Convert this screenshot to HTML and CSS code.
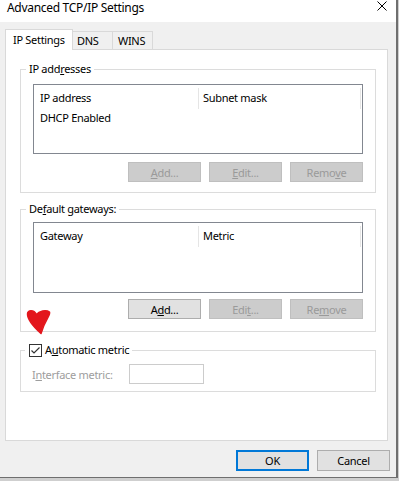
FILE: index.html
```html
<!DOCTYPE html>
<html lang="en">
<head>
    <meta charset="UTF-8">
    <meta name="viewport" content="width=device-width, initial-scale=1.0">
    <title>Advanced TCP/IP Settings</title>
    <link rel="stylesheet" href="styles.css">
</head>
<body>
    <div class="window">
        <div class="titlebar">
            <span class="title">Advanced TCP/IP Settings</span>
            <svg class="close" width="10" height="10" viewBox="0 0 10 10">
                <path d="M0.5 0.5 L9.5 9.5 M9.5 0.5 L0.5 9.5" stroke="#000" stroke-width="1" fill="none"/>
            </svg>
        </div>
        <div class="tabs">
            <div class="tab active">IP Settings</div>
            <div class="tab tab-dns">DNS</div>
            <div class="tab tab-wins">WINS</div>
        </div>
        <div class="panel">
            <div class="group group-ip">
                <div class="group-title">IP add<u>r</u>esses</div>
                <div class="listbox">
                    <div class="list-head">
                        <span class="col col-1">IP address</span>
                        <span class="col col-2">Subnet mask</span>
                    </div>
                    <div class="list-row">DHCP Enabled</div>
                </div>
                <div class="btn-row">
                    <button class="btn" disabled><u>A</u>dd...</button>
                    <button class="btn" disabled><u>E</u>dit...</button>
                    <button class="btn" disabled>Remo<u>v</u>e</button>
                </div>
            </div>
            <div class="group group-gw">
                <div class="group-title">De<u>f</u>ault gateways:</div>
                <div class="listbox listbox-gw">
                    <div class="list-head">
                        <span class="col col-1">Gateway</span>
                        <span class="col col-2">Metric</span>
                    </div>
                </div>
                <div class="btn-row">
                    <button class="btn">A<u>d</u>d...</button>
                    <button class="btn" disabled>Edi<u>t</u>...</button>
                    <button class="btn" disabled>Re<u>m</u>ove</button>
                </div>
            </div>
            <div class="group group-metric">
                <div class="group-title check-title">
                    <span class="checkbox">
                        <svg width="11" height="11" viewBox="0 0 11 11">
                            <path d="M1.5 5.5 L4 8 L9.5 2.5" stroke="#333" stroke-width="1.2" fill="none"/>
                        </svg>
                    </span>
                    <span>A<u>u</u>tomatic metric</span>
                </div>
                <div class="metric-row">
                    <span class="metric-label">I<u>n</u>terface metric:</span>
                    <span class="metric-input"></span>
                </div>
            </div>
        </div>
        <div class="footer">
            <button class="btn btn-default">OK</button>
            <button class="btn">Cancel</button>
        </div>
    </div>

    <!-- red marker drawn on top of the screenshot -->
    <svg class="scribble" width="28" height="28" viewBox="0 0 28 28">
        <path d="M3.5 6 C 3.5 1.5, 10 1.5, 12.5 6.5 C 15 3, 22 1.5, 25.5 4 C 27 7, 21 11, 17 25.5 C 12 21, 3.5 12, 3.5 6 Z" fill="#e3161c" stroke="#e3161c" stroke-width="1.5" stroke-linejoin="round"/>
    </svg>
</body>
</html>
```

FILE: styles.css
```css
body {
    margin: 0;
    background-color: #cfcfcf;
    font-family: "Noto Sans", "Liberation Sans", sans-serif;
    font-size: 11px;
    letter-spacing: -0.3px;
    color: #000;
}
.window {
    width: 396px;
    height: 477px;
    background-color: #f0f0f0;
    border-right: 2px solid #6f6f6f;
    border-bottom: 1px solid #6f6f6f;
    display: flex;
    flex-direction: column;
}
.titlebar {
    height: 22px;
    background-color: #fff;
    display: flex;
    justify-content: space-between;
    align-items: flex-start;
    padding: 0 9px 0 7px;
}
.title {
    font-size: 12px;
    line-height: 15px;
}
.close {
    margin-top: 1px;
}
.tabs {
    display: flex;
    align-items: flex-end;
    height: 20px;
    margin: 7px 0 0 5px;
    white-space: nowrap;
}
.tab {
    box-sizing: border-box;
    height: 18px;
    line-height: 18px;
    width: 40px;
    border: 1px solid #d9d9d9;
    border-left: none;
    border-bottom: none;
    background-color: #f0f0f0;
}
.tab.active {
    position: relative;
    width: 68px;
    height: 21px;
    line-height: 20px;
    margin-bottom: -1px;
    padding-left: 7px;
    border-left: 1px solid #d9d9d9;
    background-color: #fff;
}
.tab-dns {
    padding-left: 4px;
}
.tab-wins {
    padding-left: 5px;
}
.panel {
    box-sizing: border-box;
    height: 392px;
    margin: 0 8px 0 5px;
    padding: 19px 11px 0 14px;
    background-color: #fff;
    border: 1px solid #d9d9d9;
}
.group {
    border: 1px solid #dcdcdc;
    padding: 0 12px;
}
.group-title {
    width: max-content;
    height: 16px;
    line-height: 16px;
    margin: -9px 0 0 -7px;
    padding: 0 3px;
    background-color: #fff;
}
.group-ip {
    padding-bottom: 10px;
}
.group-gw {
    margin-top: 16px;
    padding-bottom: 12px;
}
.group-metric {
    margin-top: 18px;
    padding-bottom: 7px;
}
.listbox {
    box-sizing: border-box;
    height: 70px;
    margin-top: 7px;
    border: 1px solid #828790;
    background-color: #fff;
}
.listbox-gw {
    height: 71px;
    margin-top: 5px;
}
.list-head {
    display: flex;
    padding-top: 3px;
}
.col {
    box-sizing: border-box;
    height: 21px;
    line-height: 19px;
    border-right: 1px solid #e5e5e5;
}
.col-1 {
    width: 165px;
    padding-left: 6px;
}
.col-2 {
    width: 162px;
    padding-left: 4px;
}
.list-row {
    line-height: 16px;
    padding: 1px 0 0 6px;
}
.btn-row {
    display: flex;
    justify-content: flex-end;
    gap: 8px;
    margin-top: 8px;
}
.group-gw .btn-row {
    margin-top: 6px;
}
.btn {
    box-sizing: border-box;
    width: 73px;
    height: 20px;
    padding: 0;
    border: 1px solid #adadad;
    background-color: #e1e1e1;
    font-family: inherit;
    font-size: 11px;
    letter-spacing: -0.3px;
    color: #000;
}
.btn:disabled {
    background-color: #cccccc;
    border-color: #bfbfbf;
    color: #9a9a9a;
}
.check-title {
    display: flex;
    align-items: center;
    gap: 3px;
    margin-left: -8px;
    padding: 0 3px 0 4px;
}
.checkbox {
    box-sizing: border-box;
    width: 13px;
    height: 13px;
    border: 1px solid #333;
    background-color: #fff;
    display: flex;
}
.metric-row {
    display: flex;
    align-items: center;
    margin-top: 6px;
    margin-left: -1px;
}
.metric-label {
    width: 97px;
    color: #9d9d9d;
}
.metric-input {
    box-sizing: border-box;
    width: 75px;
    height: 20px;
    border: 1px solid #cccccc;
    background-color: #fff;
}
.footer {
    display: flex;
    justify-content: flex-end;
    gap: 8px;
    padding: 9px 6px 0 0;
}
.footer .btn {
    height: 21px;
}
.btn-default {
    border: 2px solid #0078d7;
}
.scribble {
    position: absolute;
    left: 24px;
    top: 308px;
}
```
